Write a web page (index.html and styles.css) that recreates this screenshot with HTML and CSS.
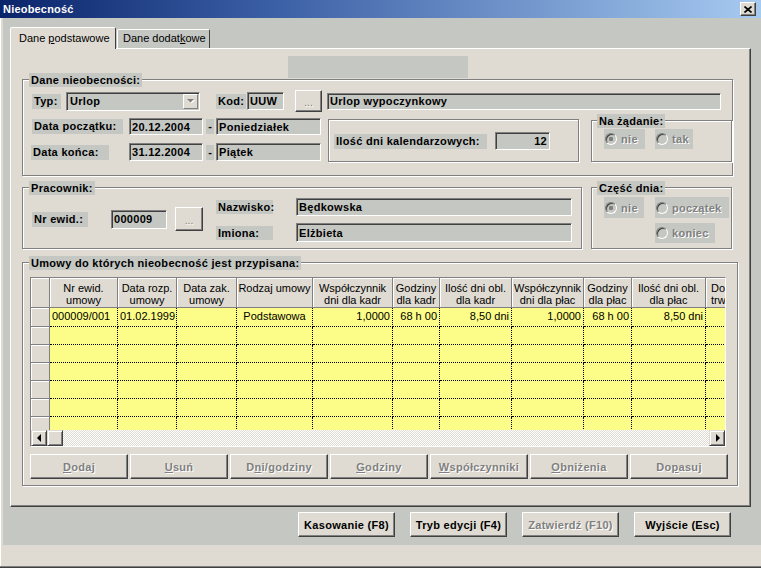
FILE: index.html
```html
<!DOCTYPE html>
<html lang="pl">
<head>
<meta charset="utf-8">
<title>Nieobecność</title>
<link rel="stylesheet" href="styles.css">
</head>
<body>
<div class="window">
  <div class="titlebar">
    <span class="title">Nieobecność</span>
    <span class="close"><svg width="8" height="7" viewBox="0 0 8 7"><path d="M0.5 0.5L7.5 6.5M7.5 0.5L0.5 6.5" stroke="#000" stroke-width="1.7"/></svg></span>
  </div>
  <div class="client">
    <div class="tabs">
      <div class="tab active t1">Dane <u>p</u>odstawowe</div>
      <div class="tab t2">Dane dodat<u>k</u>owe</div>
    </div>
    <div class="panel">
      <div class="topblock"></div>

      <div class="gb gb1">
        <span class="cap">Dane nieobecności:</span>
        <div class="r1">
          <span class="lbl w29 ml9">Typ:</span>
          <div class="fld combo ml5"><span class="ctext">Urlop</span><span class="ddbtn"><svg width="8" height="5" viewBox="0 0 8 5"><path d="M1 1h7L4.5 4.5z" fill="#fff"/><path d="M0 0h7L3.5 3.5z" fill="#808080"/></svg></span></div>
          <span class="lbl w30 ml16">Kod:</span>
          <div class="fld ml1 w37 h18">UUW</div>
          <div class="dotbtn ml11">...</div>
          <div class="fld ml5 w394 h17">Urlop wypoczynkowy</div>
        </div>
        <div class="r23">
          <div class="leftcol">
            <div class="drow h17">
              <span class="lbl ml9 w91">Data początku:</span>
              <div class="fld ml6 w74 h17">20.12.2004</div>
              <span class="dash ml3">-</span>
              <div class="fld ml2 w105 h17">Poniedziałek</div>
            </div>
            <div class="drow h18 mt8">
              <span class="lbl ml8 w78">Data końca:</span>
              <div class="fld ml20 w74 h18">31.12.2004</div>
              <span class="dash ml3">-</span>
              <div class="fld ml2 w105 h18">Piątek</div>
            </div>
          </div>
          <div class="bevel ilosc">
            <span class="lbl ml5 w153">Ilość dni kalendarzowych:</span>
            <div class="fld num ml8 w55 h18">12</div>
          </div>
          <div class="gb nazad">
            <span class="cap c5">Na żądanie:</span>
            <div class="radrow">
              <span class="radio ml12 w41"><span class="rc on"></span>nie</span>
              <span class="radio ml10 w38"><span class="rc"></span>tak</span>
            </div>
          </div>
        </div>
      </div>

      <div class="gbrow">
        <div class="gb gb2">
          <span class="cap">Pracownik:</span>
          <div class="ewid">
            <span class="lbl ml9 w56">Nr ewid.:</span>
            <div class="fld ml23 w56 h19">000009</div>
            <div class="dotbtn ml8 b28">...</div>
          </div>
          <div class="names">
            <div class="drow h18">
              <span class="lbl w57 h14">Nazwisko:</span>
              <div class="fld ml23 w276 h18">Będkowska</div>
            </div>
            <div class="drow h19 mt7">
              <span class="lbl w57 h14">Imiona:</span>
              <div class="fld ml23 w276 h19">Elżbieta</div>
            </div>
          </div>
        </div>
        <div class="gb gb3">
          <span class="cap c5">Część dnia:</span>
          <div class="crow1">
            <span class="radio ml12 w40 h21"><span class="rc on"></span>nie</span>
            <span class="radio ml11 w74 h21"><span class="rc"></span>początek</span>
          </div>
          <div class="crow2">
            <span class="radio ml63 w60"><span class="rc"></span>koniec</span>
          </div>
        </div>
      </div>

      <div class="gb gb4">
        <span class="cap">Umowy do których nieobecność jest przypisana:</span>
        <div class="grid">
          <div class="ghead cols">
            <div class="hc"></div>
            <div class="hc">Nr ewid.<br>umowy</div>
            <div class="hc">Data rozp.<br>umowy</div>
            <div class="hc">Data zak.<br>umowy</div>
            <div class="hc">Rodzaj umowy<br>&nbsp;</div>
            <div class="hc">Współczynnik<br>dni dla kadr</div>
            <div class="hc">Godziny<br>dla kadr</div>
            <div class="hc">Ilość dni obl.<br>dla kadr</div>
            <div class="hc">Współczynnik<br>dni dla płac</div>
            <div class="hc">Godziny<br>dla płac</div>
            <div class="hc">Ilość dni obl.<br>dla płac</div>
            <div class="hc l">Do<br>trwania</div>
          </div>
          <div class="gbody">
            <div class="grow cols first">
              <div class="ic"></div>
              <div class="dc">000009/001</div>
              <div class="dc">01.02.1999</div>
              <div class="dc"></div>
              <div class="dc c">Podstawowa</div>
              <div class="dc r">1,0000</div>
              <div class="dc r">68 h 00</div>
              <div class="dc r">8,50 dni</div>
              <div class="dc r">1,0000</div>
              <div class="dc r">68 h 00</div>
              <div class="dc r">8,50 dni</div>
              <div class="dc"></div>
            </div>
            <div class="grow cols"><div class="ic"></div><div class="dc"></div><div class="dc"></div><div class="dc"></div><div class="dc"></div><div class="dc"></div><div class="dc"></div><div class="dc"></div><div class="dc"></div><div class="dc"></div><div class="dc"></div><div class="dc"></div></div>
            <div class="grow cols"><div class="ic"></div><div class="dc"></div><div class="dc"></div><div class="dc"></div><div class="dc"></div><div class="dc"></div><div class="dc"></div><div class="dc"></div><div class="dc"></div><div class="dc"></div><div class="dc"></div><div class="dc"></div></div>
            <div class="grow cols"><div class="ic"></div><div class="dc"></div><div class="dc"></div><div class="dc"></div><div class="dc"></div><div class="dc"></div><div class="dc"></div><div class="dc"></div><div class="dc"></div><div class="dc"></div><div class="dc"></div><div class="dc"></div></div>
            <div class="grow cols"><div class="ic"></div><div class="dc"></div><div class="dc"></div><div class="dc"></div><div class="dc"></div><div class="dc"></div><div class="dc"></div><div class="dc"></div><div class="dc"></div><div class="dc"></div><div class="dc"></div><div class="dc"></div></div>
            <div class="grow cols"><div class="ic"></div><div class="dc"></div><div class="dc"></div><div class="dc"></div><div class="dc"></div><div class="dc"></div><div class="dc"></div><div class="dc"></div><div class="dc"></div><div class="dc"></div><div class="dc"></div><div class="dc"></div></div>
            <div class="grow cols"><div class="ic"></div><div class="dc"></div><div class="dc"></div><div class="dc"></div><div class="dc"></div><div class="dc"></div><div class="dc"></div><div class="dc"></div><div class="dc"></div><div class="dc"></div><div class="dc"></div><div class="dc"></div></div>
          </div>
          <div class="hscroll">
            <span class="sb"><span class="al"></span></span>
            <span class="sb"></span>
            <span class="track"></span>
            <span class="sb"><span class="ar"></span></span>
          </div>
        </div>
        <div class="gbtns">
          <span class="btn dis w98"><u>D</u>odaj</span>
          <span class="btn dis w98"><u>U</u>suń</span>
          <span class="btn dis w98">D<u>n</u>i/godziny</span>
          <span class="btn dis w98"><u>G</u>odziny</span>
          <span class="btn dis w98"><u>W</u>spółczynniki</span>
          <span class="btn dis w98"><u>O</u>bniżenia</span>
          <span class="btn dis w98">Do<u>p</u>asuj</span>
        </div>
      </div>
    </div>
    <div class="bottombar">
      <span class="btn">Kasowanie (F8)</span>
      <span class="btn">Tryb edycji (F4)</span>
      <span class="btn dis">Zatwierdź (F10)</span>
      <span class="btn">Wyjście (Esc)</span>
    </div>
  </div>
</div>
</body>
</html>
```

FILE: styles.css
```css
* { box-sizing: border-box; }
html, body { margin: 0; padding: 0; }
body {
  width: 761px; height: 568px; overflow: hidden;
  font-family: "Liberation Sans", Arial, sans-serif;
  font-size: 11px; color: #000;
  background: #dfdbd2;
}
u { text-decoration: underline; text-underline-offset: 1px; }

.window {
  width: 761px; height: 568px;
  background: #dfdbd2;
  border-bottom: 1px solid #404040;
  box-shadow: inset 0 -1px 0 #808080, inset 1px 0 0 #fff;
}

/* title bar */
.titlebar {
  height: 18px;
  display: flex; align-items: center; justify-content: space-between;
  padding: 0 5px 0 3px;
  background: linear-gradient(90deg, #0a246a 0%, #3a5ea4 35%, #a6caf0 100%);
}
.title { color: #fff; font-weight: bold; letter-spacing: 0.2px; line-height: 18px; }
.close {
  width: 16px; height: 14px;
  background: #dfdbd2;
  border: 1px solid; border-color: #fff #404040 #404040 #fff;
  box-shadow: inset -1px -1px 0 #808080;
  display: flex; align-items: center; justify-content: center;
}

/* client area */
.client {
  margin-left: 3px;
  height: 527px;
  background: #c5c7c3;
  padding-top: 9px;
}

.tabs { display: flex; align-items: flex-end; height: 21px; margin-left: 7px; }
.tab {
  height: 19px;
  background: #c5c7c3;
  border: 1px solid; border-bottom: none;
  border-color: #fff #404040 transparent #fff;
  border-radius: 2px 2px 0 0;
  line-height: 16px;
  white-space: nowrap;
}
.tab.t1 { width: 106px; padding-left: 8px; }
.tab.t2 { width: 93px; padding-left: 5px; margin-left: 1px; }
.tab.active {
  height: 22px; margin-bottom: -1px;
  background: #dfdbd2;
  line-height: 18px; padding-top: 1px;
  position: relative; z-index: 1;
}

.panel {
  margin-left: 7px;
  width: 741px; height: 459px;
  background: #dfdbd2;
  border: 1px solid; border-color: #fff #404040 #404040 #fff;
  box-shadow: inset -1px -1px 0 #808080;
  display: flex; flex-direction: column; align-items: flex-start;
}
.topblock { margin: 7px 0 0 277px; width: 180px; height: 22px; background: #c5c7c3; flex: none; }

/* group boxes */
.gb, .bevel {
  position: relative;
  border: 1px solid #808080;
  box-shadow: inset 1px 1px 0 #fff, 1px 1px 0 #fff;
  flex: none;
}
.cap {
  position: absolute; top: -7px; left: 6px;
  height: 14px; line-height: 14px;
  padding: 0 2px;
  background: #c5c7c3;
  font-weight: bold; letter-spacing: 0.3px;
  white-space: nowrap;
}
.cap.c5 { left: 5px; }

.gb1 { margin: 1px 0 0 11px; width: 711px; height: 97px; display: flex; flex-direction: column; }
.r1 { margin-top: 10px; height: 22px; display: flex; align-items: center; }
.r23 { margin-top: 6px; display: flex; align-items: flex-start; }
.leftcol { display: flex; flex-direction: column; }
.drow { display: flex; align-items: center; }
.ilosc { margin: 1px 0 0 7px; width: 251px; height: 43px; display: flex; align-items: center; padding-top: 1px; }
.nazad { margin: 2px 0 0 12px; width: 141px; height: 42px; }
.radrow { display: flex; margin-top: 8px; }

.gbrow { display: flex; margin-top: 11px; flex: none; }
.gb2 { margin-left: 11px; width: 560px; height: 62px; display: flex; align-items: flex-start; }
.ewid { margin-top: 19px; height: 24px; display: flex; align-items: center; }
.names { margin: 10px 0 0 13px; display: flex; flex-direction: column; }
.gb3 { margin-left: 9px; width: 141px; height: 62px; }
.crow1 { display: flex; margin-top: 9px; }
.crow2 { display: flex; margin-top: 5px; }

.gb4 { margin: 13px 0 0 11px; width: 716px; height: 224px; }

/* widgets */
.lbl {
  flex: none;
  height: 15px; line-height: 15px;
  padding-left: 2px;
  background: #c5c7c3;
  font-weight: bold; letter-spacing: 0.3px;
  white-space: nowrap;
}
.fld {
  flex: none;
  background: #c5c7c3;
  border: 1px solid; border-color: #808080 #fff #fff #808080;
  box-shadow: inset 1px 1px 0 #404040;
  font-weight: bold; letter-spacing: 0.3px;
  padding-left: 2px;
  display: flex; align-items: center;
  white-space: nowrap; overflow: hidden;
}
.fld.num { justify-content: flex-end; padding-right: 2px; }
.combo { width: 134px; height: 19px; padding-left: 3px; }
.ctext { flex: 1; }
.ddbtn {
  width: 15px; height: 15px; margin-right: 1px;
  background: #dfdbd2;
  border: 1px solid; border-color: #fff #808080 #808080 #fff;
  display: flex; align-items: center; justify-content: center;
}
.dotbtn {
  flex: none;
  width: 27px; height: 22px;
  background: #dfdbd2;
  border: 1px solid; border-color: #fff #404040 #404040 #fff;
  box-shadow: inset -1px -1px 0 #808080;
  color: #808080; text-shadow: 1px 1px 0 #fff;
  display: flex; align-items: center; justify-content: center;
  padding-top: 2px;
  font-size: 10px;
}
.dotbtn.b28 { width: 28px; height: 24px; }
.dash {
  flex: none;
  width: 8px; height: 15px; line-height: 15px;
  background: #c5c7c3;
  text-align: center; font-weight: bold;
}
.radio {
  flex: none;
  display: flex; align-items: center;
  height: 20px;
  padding-left: 1px;
  background: #c5c7c3;
  font-weight: bold; letter-spacing: 0.3px;
  color: #808080; text-shadow: 1px 1px 0 #fff;
  white-space: nowrap;
}
.rc {
  flex: none;
  width: 12px; height: 12px;
  margin-right: 4px;
  border-radius: 50%;
  border: 1px solid; border-color: #808080 #fff #fff #808080;
  box-shadow: inset 1px 1px 0 #404040;
  background: #c5c7c3;
}
.rc.on { background: radial-gradient(circle at 50% 50%, #808080 0 2px, #c5c7c3 2.5px); }

/* buttons */
.gbtns { display: flex; gap: 2px; margin: 7px 0 0 7px; }
.btn {
  flex: none;
  width: 97px; height: 25px;
  background: #dfdbd2;
  border: 1px solid; border-color: #fff #404040 #404040 #fff;
  box-shadow: inset -1px -1px 0 #808080;
  font-weight: bold; letter-spacing: 0.3px;
  display: flex; align-items: center; justify-content: center;
  white-space: nowrap;
}
.btn.dis { color: #808080; text-shadow: 1px 1px 0 #fff; }
.bottombar { display: flex; gap: 15px; padding-left: 295px; margin-top: 5px; }

/* sizes */
.w29 { width: 29px; } .w30 { width: 30px; } .w37 { width: 37px; } .w38 { width: 38px; }
.w40 { width: 40px; } .w41 { width: 41px; } .w55 { width: 55px; } .w56 { width: 56px; }
.w57 { width: 57px; } .w60 { width: 60px; } .w74 { width: 74px; } .w78 { width: 78px; }
.w91 { width: 91px; } .w105 { width: 105px; } .w153 { width: 153px; } .w276 { width: 276px; }
.w394 { width: 394px; } .btn.w98 { width: 98px; }
.h14 { height: 14px; line-height: 14px; } .h17 { height: 17px; } .h18 { height: 18px; }
.h19 { height: 19px; } .h21 { height: 21px; }
.ml1 { margin-left: 1px; } .ml2 { margin-left: 2px; } .ml3 { margin-left: 3px; }
.ml5 { margin-left: 5px; } .ml6 { margin-left: 6px; } .ml8 { margin-left: 8px; }
.ml9 { margin-left: 9px; } .ml10 { margin-left: 10px; } .ml11 { margin-left: 11px; }
.ml12 { margin-left: 12px; } .ml16 { margin-left: 16px; } .ml20 { margin-left: 20px; }
.ml23 { margin-left: 23px; } .ml63 { margin-left: 63px; }
.mt7 { margin-top: 7px; } .mt8 { margin-top: 8px; }

/* data grid */
.grid {
  margin: 14px 0 0 7px;
  width: 696px; height: 170px;
  border: 1px solid; border-color: #808080 #fff #fff #808080;
  display: flex; flex-direction: column;
  overflow: hidden;
  background: #c5c7c3;
}
.cols {
  display: grid;
  grid-template-columns: 19px 68px 59px 60px 76px 80px 47px 72px 72px 48px 74px 60px;
  width: 735px;
  flex: none;
}
.ghead { height: 30px; }
.hc {
  background: #dfdbd2;
  border-right: 1px solid #808080;
  border-bottom: 1px solid #808080;
  box-shadow: inset 1px 1px 0 #fff;
  text-align: center;
  line-height: 12px;
  padding-top: 4px;
  white-space: nowrap; overflow: hidden;
}
.hc.l { text-align: left; padding-left: 5px; }
.gbody { height: 122px; overflow: hidden; flex: none; }
.grow { height: 18px; }
.grow.first { height: 19px; }
.ic {
  background: #dfdbd2;
  border-right: 1px solid #808080;
  border-bottom: 1px solid #808080;
  box-shadow: inset 1px 1px 0 #fff;
}
.dc {
  background: #fcfc88;
  border-right: 1px dotted #000;
  border-bottom: 1px dotted #000;
  line-height: 16px;
  padding: 0 2px 0 2px;
  white-space: nowrap; overflow: hidden;
}
.dc.r { text-align: right; }
.dc.c { text-align: center; }

.hscroll { display: flex; height: 16px; flex: none; width: 694px; }
.track {
  flex: 1;
  background: repeating-conic-gradient(#ffffff 0 25%, #dfdbd2 0 50%) 0 0 / 2px 2px;
}
.sb {
  flex: none;
  width: 16px; height: 16px;
  background: #dfdbd2;
  border: 1px solid; border-color: #dfdbd2 #404040 #404040 #dfdbd2;
  box-shadow: inset 1px 1px 0 #fff, inset -1px -1px 0 #808080;
  display: flex; align-items: center; justify-content: center;
}
.al { width: 0; height: 0; border-top: 4px solid transparent; border-bottom: 4px solid transparent; border-right: 4px solid #000; margin-right: 1px; }
.ar { width: 0; height: 0; border-top: 4px solid transparent; border-bottom: 4px solid transparent; border-left: 4px solid #000; margin-left: 1px; }
```
